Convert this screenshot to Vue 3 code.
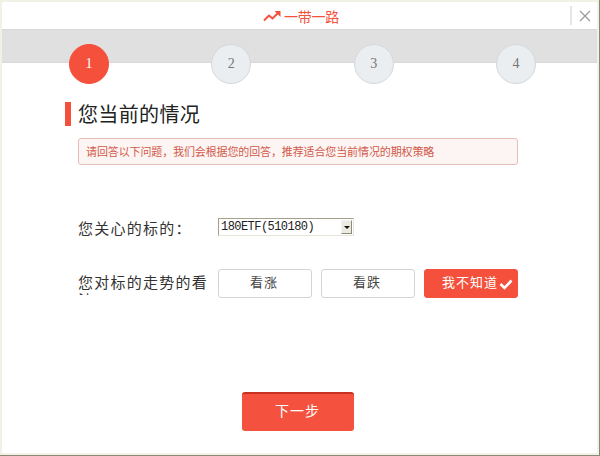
<template>
  <div class="window">
    <header class="title-bar">
      <div class="brand">
        <svg class="brand-icon" width="18" height="12" viewBox="0 0 18 12">
          <path d="M1 10.5 L6 5.5 L9.5 8.5 L15 3" fill="none" stroke="#f4503c" stroke-width="2" />
          <path d="M11.5 1 H17.5 V7 Z" fill="#f4503c" />
        </svg>
        <span>一带一路</span>
      </div>
      <div class="close-wrap">
        <svg width="12" height="12" viewBox="0 0 12 12">
          <path d="M1 1 L11 11 M11 1 L1 11" stroke="#9a9a9a" stroke-width="1.2" fill="none" />
        </svg>
      </div>
    </header>

    <div class="steps-band">
      <div class="steps">
        <div
          v-for="step in steps"
          :key="step"
          class="step"
          :class="{ active: step === current }"
        >
          {{ step }}
        </div>
      </div>
    </div>

    <main class="content">
      <h2 class="section-title">您当前的情况</h2>
      <p class="notice">请回答以下问题，我们会根据您的回答，推荐适合您当前情况的期权策略</p>

      <div class="form-row first">
        <label class="field-label">您关心的标的：</label>
        <div class="select-box">
          <span class="select-value">180ETF(510180)</span>
          <span class="select-arrow"></span>
        </div>
      </div>

      <div class="form-row second">
        <label class="field-label clipped">您对标的走势的看法：</label>
        <div class="options">
          <button
            v-for="opt in options"
            :key="opt"
            class="option"
            :class="{ selected: opt === selected }"
          >
            {{ opt }}
            <svg v-if="opt === selected" class="check" width="14" height="12" viewBox="0 0 14 12">
              <path d="M1.5 6 L5.5 10 L12.5 2.5" fill="none" stroke="#fff" stroke-width="2.6" />
            </svg>
          </button>
        </div>
      </div>

      <div class="footer">
        <button class="next-btn">下一步</button>
      </div>
    </main>
  </div>
</template>

<script setup>
const steps = [1, 2, 3, 4]
const current = 1
const options = ['看涨', '看跌', '我不知道']
const selected = '我不知道'
</script>

<style>
html,
body {
  margin: 0;
  background: #f2f1e6;
}
</style>

<style scoped>
.window {
  box-sizing: border-box;
  width: 600px;
  height: 456px;
  padding: 2px 2px 3px 2px;
  background: #f2f1e6;
  border-right: 1px solid #8a8778;
  border-bottom: 1px solid #8a8778;
  font-family: "Noto Sans CJK SC", sans-serif;
  overflow: hidden;
}

.title-bar {
  display: flex;
  align-items: center;
  justify-content: center;
  position: relative;
  height: 27px;
  background: #fff;
}

.brand {
  display: flex;
  align-items: center;
  gap: 3px;
  font-size: 14px;
  letter-spacing: -0.3px;
  color: #f4503c;
  margin-left: 3px;
}

.brand-icon {
  display: block;
}

.close-wrap {
  position: absolute;
  right: 0;
  top: 4px;
  width: 25px;
  height: 19px;
  border-left: 2px solid #e6e6e6;
  display: flex;
  align-items: center;
  justify-content: center;
}

.steps-band {
  height: 34px;
  background: #e0e0e0;
  border-top: 1px solid #d8d8d8;
  border-bottom: 1px solid #d8d8d8;
  box-sizing: border-box;
}

.steps {
  display: flex;
  justify-content: space-between;
  padding: 14px 61px 0 67px;
}

.step {
  box-sizing: border-box;
  width: 40px;
  height: 40px;
  border-radius: 50%;
  background: #ebeef1;
  border: 1px solid #d5d8da;
  color: #777;
  font-family: "Liberation Serif", serif;
  font-size: 14px;
  display: flex;
  align-items: center;
  justify-content: center;
  position: relative;
}

.step.active {
  background: #f4503c;
  border-color: #f4503c;
  color: #fff;
}

.content {
  background: #fff;
  height: 390px;
  padding-top: 39px;
  box-sizing: border-box;
}

.section-title {
  margin: 0 0 0 63px;
  padding-left: 7px;
  border-left: 6px solid #f4503c;
  height: 24px;
  line-height: 24px;
  font-size: 20px;
  letter-spacing: 0.35px;
  font-weight: 400;
  color: #222;
}

.notice {
  box-sizing: border-box;
  margin: 12px 0 0 76px;
  width: 440px;
  height: 27px;
  line-height: 25px;
  padding-left: 7px;
  font-size: 11px;
  letter-spacing: -0.12px;
  color: #d2584a;
  background: #fdf5f3;
  border: 1px solid #e6bdb5;
  border-radius: 3px;
}

.form-row {
  display: flex;
  margin-left: 76px;
}

.form-row.first {
  margin-top: 53px;
  align-items: center;
  height: 18px;
}

.form-row.second {
  margin-top: 33px;
  height: 29px;
}

.field-label {
  display: block;
  width: 140px;
  flex-shrink: 0;
  font-size: 15px;
  letter-spacing: 1.25px;
  color: #333;
}

.field-label.clipped {
  width: 130px;
  margin-right: 10px;
  height: 22px;
  margin-top: 4px;
  line-height: 18px;
  overflow: hidden;
}

.select-box {
  box-sizing: border-box;
  display: flex;
  align-items: center;
  justify-content: space-between;
  width: 136px;
  height: 18px;
  padding: 1px;
  border: 1px solid #a5a08c;
  border-right-color: #e8e6da;
  border-bottom-color: #e8e6da;
  background: #fff;
}

.select-value {
  font-family: "Liberation Mono", monospace;
  font-size: 12px;
  letter-spacing: -0.55px;
  color: #222;
  padding-left: 1px;
}

.select-arrow {
  box-sizing: border-box;
  position: relative;
  width: 11px;
  height: 14px;
  background: #ecebe2;
  border: 1px solid #8d8a7c;
  border-top-color: #f5f5f0;
  border-left-color: #f5f5f0;
}

.select-arrow::after {
  content: "";
  position: absolute;
  left: 2px;
  top: 5px;
  border-left: 3px solid transparent;
  border-right: 3px solid transparent;
  border-top: 3px solid #111;
}

.options {
  display: flex;
  gap: 9px;
}

.option {
  box-sizing: border-box;
  position: relative;
  width: 94px;
  height: 29px;
  padding: 0 2px 5px 0;
  border: 1px solid #d4d4d4;
  border-radius: 3px;
  background: #fff;
  color: #444;
  font-family: inherit;
  font-size: 13px;
  letter-spacing: 1px;
}

.option.selected {
  background: #f4503c;
  border-color: #f4503c;
  color: #fff;
}

.check {
  position: absolute;
  right: 4px;
  top: 8px;
}

.footer {
  display: flex;
  justify-content: center;
  margin-top: 94px;
  padding-right: 4px;
}

.next-btn {
  box-sizing: border-box;
  width: 112px;
  height: 39px;
  padding: 0 0 5px;
  border: none;
  border-top: 2px solid #c9301f;
  border-radius: 3px;
  background: #f4523e;
  color: #fff;
  font-family: inherit;
  font-size: 14px;
  letter-spacing: 1px;
}
</style>
